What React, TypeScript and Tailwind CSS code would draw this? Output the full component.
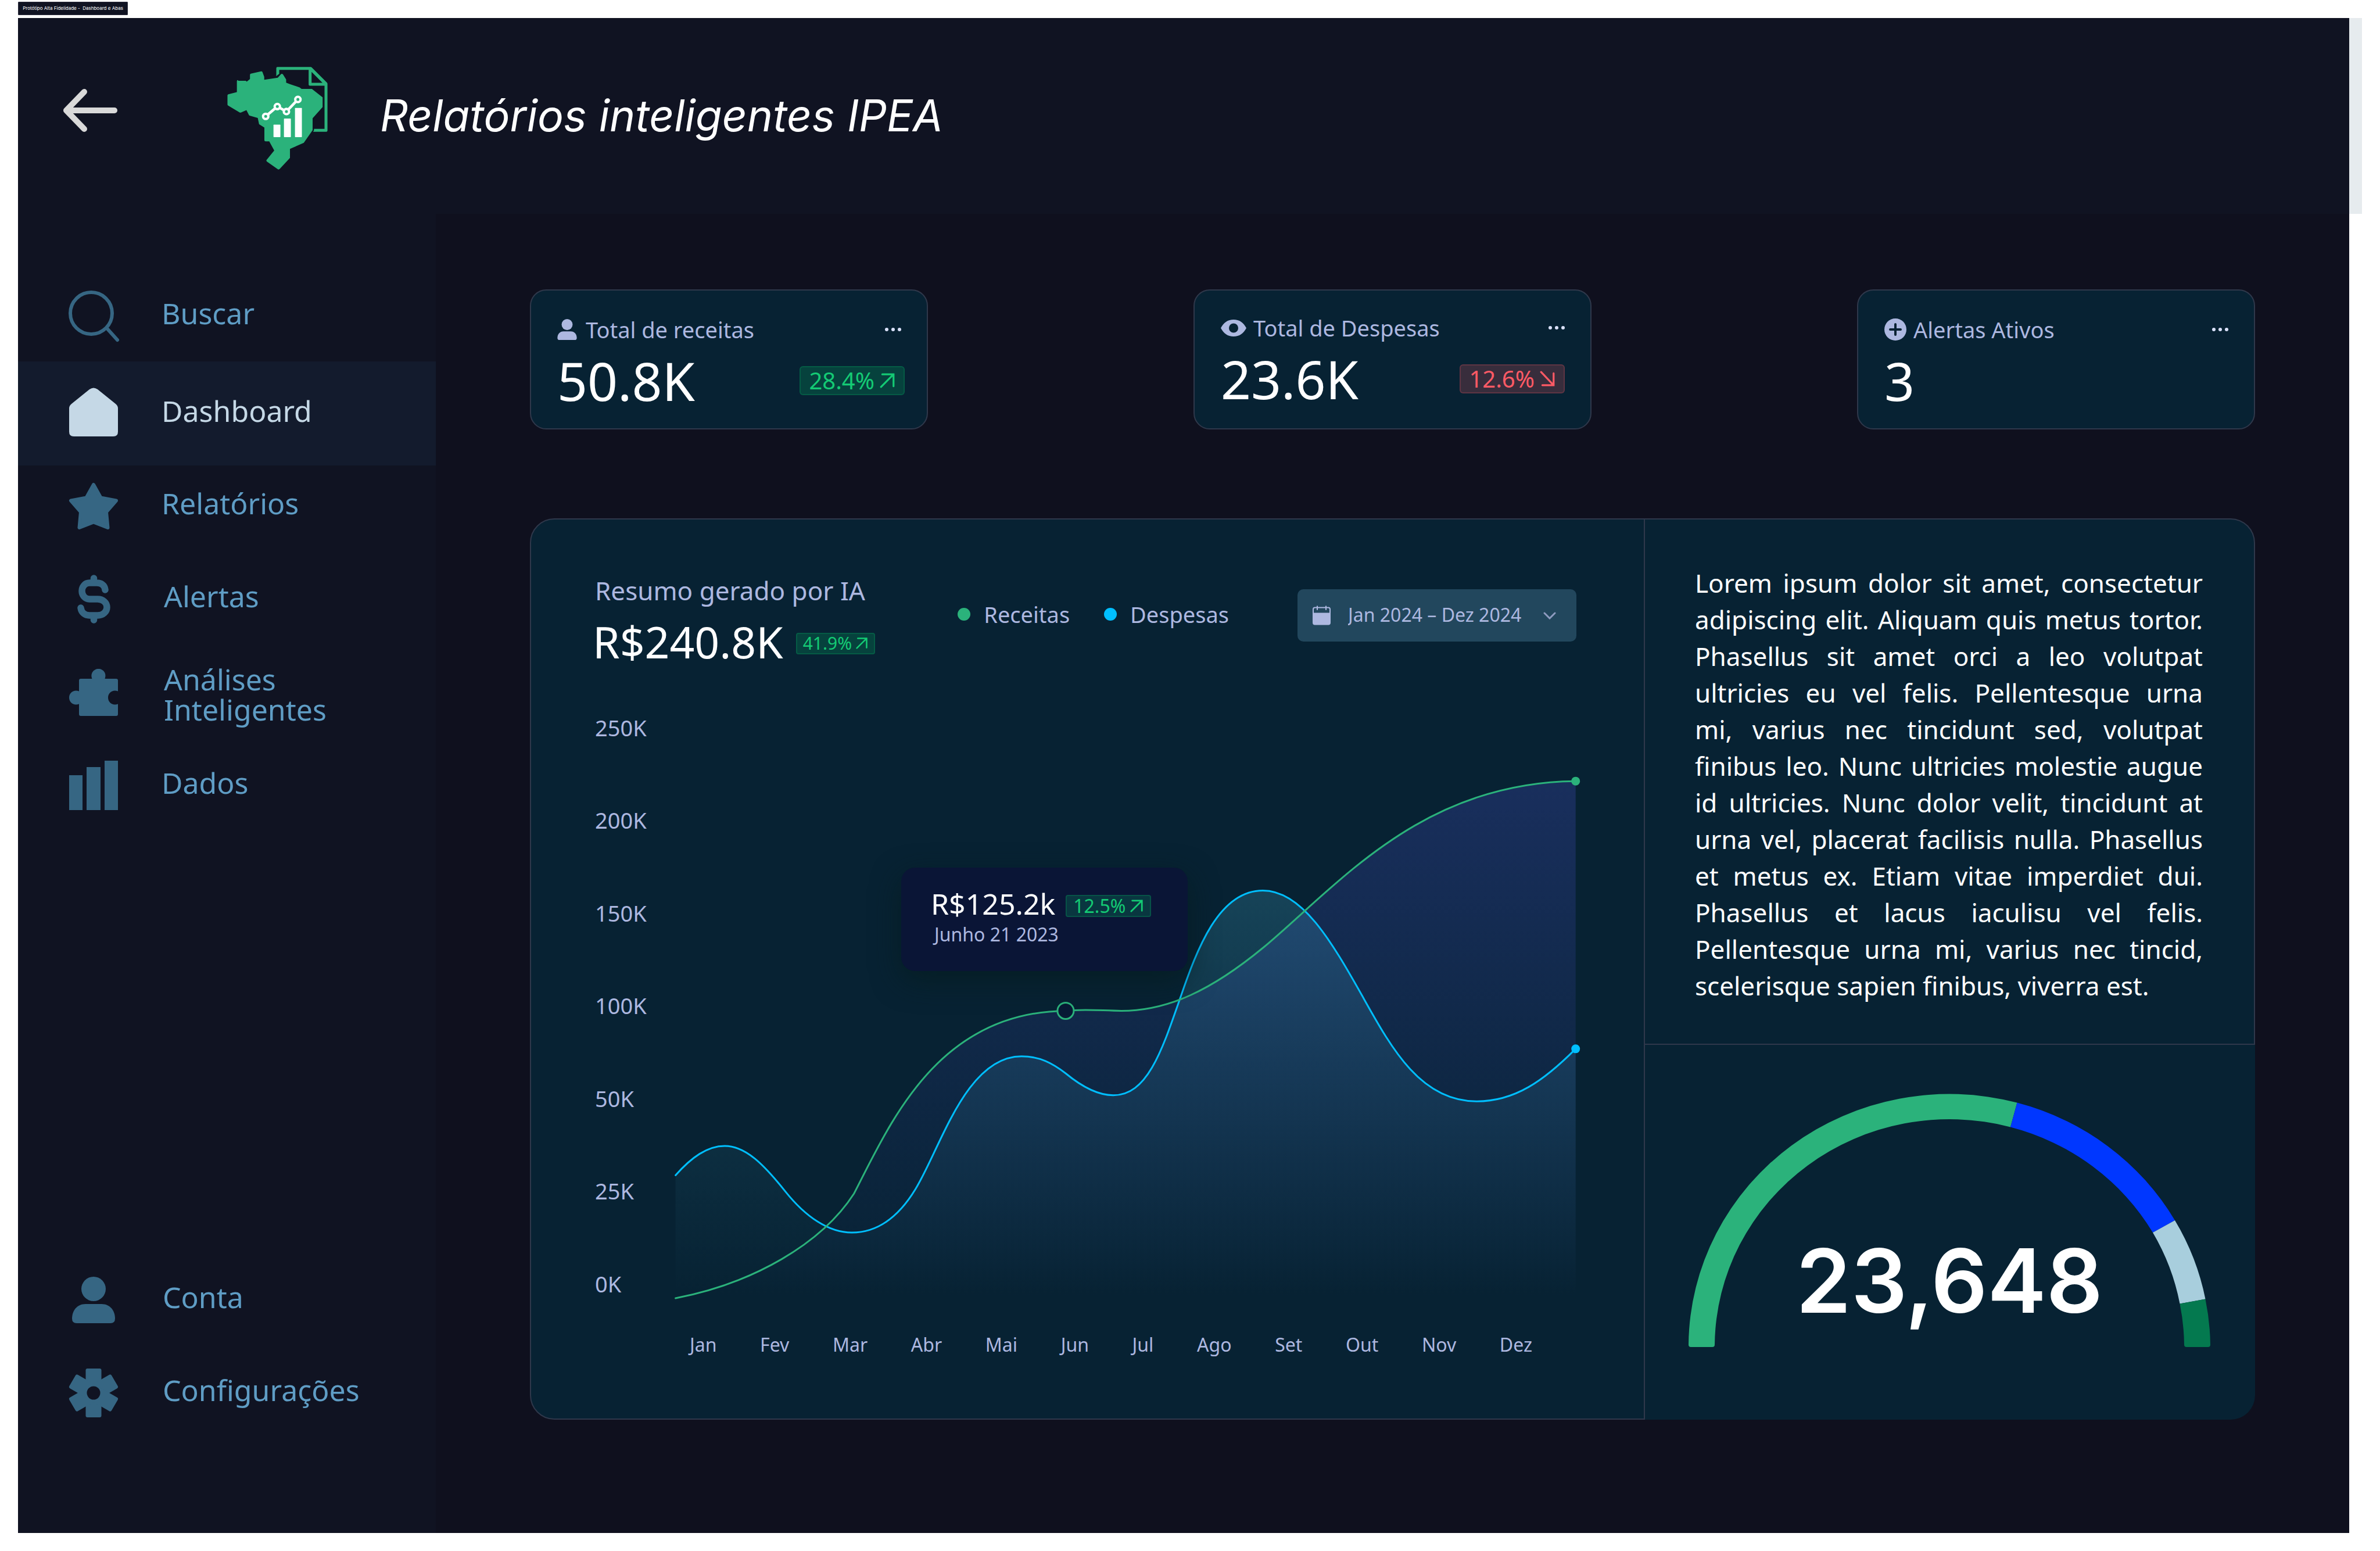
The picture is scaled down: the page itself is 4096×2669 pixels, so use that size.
import React from "react";

type IconProps = { className?: string };

/* ---------- Icons ---------- */

function ArrowLeftIcon({ className }: IconProps) {
  return (
    <svg viewBox="0 0 94 74" className={className} fill="none" stroke="currentColor" strokeWidth="10" strokeLinecap="round" strokeLinejoin="round" aria-hidden="true">
      <path d="M37 5 6 37l31 32" />
      <path d="M8 37h81" />
    </svg>
  );
}

function Logo({ className }: IconProps) {
  return (
    <svg viewBox="0 0 810 810" className={className} aria-hidden="true">
      <path
        fill="#2bb27b"
        d="M146 166h52l6 6 22-18v-28q0-6 6-8l70-16q6-1 9 5l12 32v20l92-14 18-20q8-12 18-2l21 34v22l28 11 64 21 13 10h70l73 58v66l-68 76v81l-60 86-94 41v61l-70 76q-7 6-14 1l-73-52q-6-5-2-11l52-64-34-62h-25q-8 0-8-8v-86l-36-23-9-42-55-16q-4-2-6-6l-16-32-36 16q-6 3-12-1l-76-45q-5-3-5-8v-61q0-6 6-8l58-15v-74q0-8 8-8z"
      />
      <path
        fill="#2bb27b"
        fillRule="evenodd"
        d="M405 135V80q0-8 8-8h226q4 0 7 3l103 103q4 4 4 9v318q0 8-8 8h-90q7-6 7-20h71V200H633q-8 0-8-8V92H425v28q-10 4-20 15zM645 106v74h74z"
      />
      <g fill="#fff">
        <rect x="386" y="464" width="47" height="85" rx="3" />
        <rect x="457" y="423" width="47" height="126" rx="3" />
        <rect x="532" y="351" width="47" height="198" rx="3" />
      </g>
      <path d="M333 408l79-67 62 34 78-82" fill="none" stroke="#fff" strokeWidth="18" />
      <g fill="#2bb27b" stroke="#fff" strokeWidth="16">
        <circle cx="333" cy="408" r="18" />
        <circle cx="412" cy="341" r="18" />
        <circle cx="474" cy="375" r="18" />
        <circle cx="552" cy="293" r="18" />
      </g>
    </svg>
  );
}

function NavSvg({ children }: { children: React.ReactNode }) {
  return (
    <svg viewBox="0 0 84 84" className="size-[84px] shrink-0 overflow-visible" fill="currentColor" aria-hidden="true">
      {children}
    </svg>
  );
}

const SearchIcon = () => (
  <NavSvg>
    <circle cx="38" cy="37" r="36" fill="none" stroke="currentColor" strokeWidth="6" />
    <path d="M65 63l18 20" stroke="currentColor" strokeWidth="6" strokeLinecap="round" />
  </NavSvg>
);

const HomeIcon = () => (
  <NavSvg>
    <path d="M35 3q7-5 14 0l31 25q4 3 4 8v40q0 8-8 8H8q-8 0-8-8V36q0-5 4-8z" />
  </NavSvg>
);

const StarIcon = () => (
  <NavSvg>
    <path d="M42 5l12.5 22.500 26.500 5L64 52l2.500 27L42 69.500 17.500 79 20 52 3 32.500l26.500-5z" stroke="currentColor" strokeWidth="6" strokeLinejoin="round" />
  </NavSvg>
);

const DollarIcon = () => (
  <NavSvg>
    <path
      d="M62 26c-1-9-8-12-14-12H35c-8 0-13 7-13 14s5 14 13 14h14c9 0 16 6 16 14s-7 14-16 14H35c-8 0-14-5-15-13M42.500 6v8M42.500 70v8"
      fill="none"
      stroke="currentColor"
      strokeWidth="11.500"
      strokeLinecap="round"
    />
  </NavSvg>
);

const PuzzleIcon = () => (
  <NavSvg>
    <path d="M17 22q0-3 3-3h19.500C36 10 42 2 50.500 2S65 10 61.500 19H81q3 0 3 3v18.500C75 37 67 43 67 51.500S75 66 84 62.500V80q0 3-3 3H20q-3 0-3-3V62.500C8 66 0 60 0 51.500S8 37 17 40.500z" />
  </NavSvg>
);

const BarsIcon = () => (
  <NavSvg>
    <rect x="0" y="25" width="23" height="60" />
    <rect x="30" y="11" width="24" height="74" />
    <rect x="61" y="0" width="23" height="85" />
  </NavSvg>
);

const personBody = "M28 49h28c14 0 23 11 23 25q0 8-8 8H13q-8 0-8-8c0-14 9-25 23-25z";

const PersonIcon = () => (
  <NavSvg>
    <circle cx="42" cy="23" r="21" />
    <path d={personBody} />
  </NavSvg>
);

const GearIcon = () => (
  <NavSvg>
    <rect x="28.500" y="0" width="27" height="84" rx="3" />
    <rect x="28.500" y="0" width="27" height="84" rx="3" transform="rotate(60 42 42)" />
    <rect x="28.500" y="0" width="27" height="84" rx="3" transform="rotate(120 42 42)" />
    <circle cx="42" cy="42" r="11.500" fill="#101322" />
  </NavSvg>
);

const SmallPersonIcon = () => (
  <svg viewBox="5 2 74 80" className="h-[36px] w-[34px]" fill="currentColor" aria-hidden="true">
    <circle cx="42" cy="23" r="21" />
    <path d={personBody} />
  </svg>
);

const EyeIcon = () => (
  <svg viewBox="0 0 44 29" className="h-[29px] w-[44px]" fill="currentColor" aria-hidden="true">
    <path fillRule="evenodd" d="M0 14.500C5 5 12 0 22 0s17 5 22 14.500C39 24 32 29 22 29S5 24 0 14.500zM22 6.500a8 8 0 100 16 8 8 0 000-16z" />
  </svg>
);

const PlusCircleIcon = () => (
  <svg viewBox="0 0 38 38" className="size-[38px]" aria-hidden="true">
    <circle cx="19" cy="19" r="19" fill="currentColor" />
    <path d="M19 10v18M10 19h18" stroke="#072233" strokeWidth="4" strokeLinecap="round" />
  </svg>
);

const CalendarIcon = ({ className }: IconProps) => (
  <svg viewBox="0 0 31 33" className={className} fill="currentColor" aria-hidden="true">
    <path fillRule="evenodd" d="M4 2h23q4 0 4 4v23q0 4-4 4H4q-4 0-4-4V6q0-4 4-4zM2 6v6h27V6q0-2-2-2h-3v3h-2V4H9v3H7V4H4Q2 4 2 6z" />
    <rect x="7" y="0" width="2" height="7" />
    <rect x="22" y="0" width="2" height="7" />
  </svg>
);

function TrendIcon({ down, className }: { down?: boolean; className?: string }) {
  return (
    <svg viewBox="0 0 26 26" className={className} fill="none" stroke="currentColor" strokeWidth="3" strokeLinecap="round" strokeLinejoin="miter" aria-hidden="true">
      {down ? <path d="M3 2l20 21M5 23h18V4" /> : <path d="M3 23L23 3M5 3h18v19" />}
    </svg>
  );
}

/* ---------- Sidebar ---------- */

type NavItemProps = { icon: React.ReactNode; label: string; row: string; text: string; active?: boolean };

function NavItem({ icon, label, row, text, active }: NavItemProps) {
  return (
    <li>
      <a
        href="#"
        aria-current={active ? "page" : undefined}
        className={`flex items-center gap-[75px] pl-[88px] ${row} ${active ? "bg-[#131b2d] text-[#c5d8e6]" : "text-[#366683]"}`}
      >
        {icon}
        <span className={`text-[50px] leading-[52px] ${text} ${active ? "" : "text-[#5f9dc5]"}`}>{label}</span>
      </a>
    </li>
  );
}

function Sidebar() {
  return (
    <aside className="flex w-[719px] shrink-0 flex-col justify-between bg-[#101322] pt-[97px] pb-[161px]">
      <nav aria-label="Principal">
        <ul>
          <NavItem icon={<SearchIcon />} label="Buscar" row="h-[157px]" text="pb-[10px]" />
          <NavItem icon={<HomeIcon />} label="Dashboard" row="h-[179px] pb-[5px]" text="pb-[4px]" active />
          <NavItem icon={<StarIcon />} label="Relatórios" row="h-[150px] pb-[10px]" text="pb-[10px]" />
          <NavItem icon={<DollarIcon />} label="Alertas" row="h-[160px]" text="pb-[10px] pl-[4px]" />
          <NavItem icon={<PuzzleIcon />} label="Análises Inteligentes" row="h-[160px]" text="w-[300px] pt-[8px] pl-[4px]" />
          <NavItem icon={<BarsIcon />} label="Dados" row="h-[160px]" text="pb-[8px]" />
        </ul>
      </nav>
      <nav aria-label="Usuário">
        <ul>
          <NavItem icon={<PersonIcon />} label="Conta" row="h-[160px]" text="pb-[10px] pl-[2px]" />
          <NavItem icon={<GearIcon />} label="Configurações" row="h-[160px]" text="pb-[10px] pl-[2px]" />
        </ul>
      </nav>
    </aside>
  );
}

/* ---------- Summary cards ---------- */

const badgeSizes = {
  sm: { box: "h-[37px] gap-[6px] rounded-[4px] px-[10px] text-[30px]", icon: "size-[22px]" },
  md: { box: "h-[38px] gap-[7px] rounded-[4px] px-[11px] text-[32px]", icon: "size-[24px]" },
  lg: { box: "h-[50px] gap-[8px] rounded-[6px] px-[14px] text-[40px]", icon: "size-[28px]" },
};

function Badge({ value, down, size = "lg" }: { value: string; down?: boolean; size?: keyof typeof badgeSizes }) {
  const tone = down
    ? "border-[#ff5a65]/20 bg-[#ff5a65]/20 text-[#ff5a65]"
    : "border-[#05c168]/20 bg-[#05c168]/20 text-[#14ca74]";
  return (
    <span className={`flex items-center border-2 leading-none ${tone} ${badgeSizes[size].box}`}>
      {value}
      <TrendIcon down={down} className={badgeSizes[size].icon} />
    </span>
  );
}

type CardProps = { icon: React.ReactNode; title: string; value: string; badge?: React.ReactNode; gap: string; pad: string };

function StatCard({ icon, title, value, badge, gap, pad }: CardProps) {
  return (
    <article className={`h-[241px] w-[685px] rounded-[28px] border-2 border-[#2f384b] bg-[#072233] pr-[38px] pl-[45px] ${pad}`}>
      <div className="flex h-[48px] items-center">
        <h2 className={`flex items-center text-[38px] leading-[48px] text-[#adb8e0] ${gap}`}>
          {icon}
          {title}
        </h2>
        <button type="button" aria-label="Mais opções" className="mr-[6px] ml-auto flex gap-[5px]">
          <i className="size-[6px] rounded-full bg-[#d9e1fa]" />
          <i className="size-[6px] rounded-full bg-[#d9e1fa]" />
          <i className="size-[6px] rounded-full bg-[#d9e1fa]" />
        </button>
      </div>
      <div className="flex h-[128px] items-center justify-between">
        <p className="text-[91px] leading-none text-white">{value}</p>
        {badge}
      </div>
    </article>
  );
}

/* ---------- Chart ---------- */

type Point = [number, number];
type Curve = { start: Point; segments: [Point, Point, Point][] };

const revenue: Curve = {
  start: [213, 1249],
  segments: [
    [[320, 1215], [415, 1125], [460, 1010]],
    [[510, 850], [575, 595], [753, 592]],
    [[780, 587], [805, 592], [830, 592]],
    [[895, 592], [955, 545], [1027, 447]],
    [[1130, 305], [1245, 70], [1459, 67]],
  ],
};

const expenses: Curve = {
  start: [213, 968],
  segments: [
    [[235, 927], [257, 901], [281, 901]],
    [[310, 901], [335, 943], [365, 1005]],
    [[393, 1063], [425, 1099], [457, 1099]],
    [[490, 1099], [520, 1068], [545, 1000]],
    [[580, 905], [615, 696], [692, 696]],
    [[717, 696], [735, 712], [753, 735]],
    [[775, 765], [797, 785], [819, 785]],
    [[865, 785], [885, 690], [911, 566]],
    [[935, 450], [965, 317], [1026, 317]],
    [[1080, 317], [1120, 430], [1165, 562]],
    [[1205, 680], [1245, 799], [1322, 799]],
    [[1375, 799], [1415, 752], [1459, 679]],
  ],
};

const sx = (x: number) => Math.round((x * 1.2424 - 264) * 10) / 10;
const sy = (y: number) => Math.round((y * 0.7523 + 67.7) * 10) / 10;
const pt = ([x, y]: Point) => `${sx(x)} ${sy(y)}`;
const linePath = (c: Curve) => `M${pt(c.start)}` + c.segments.map((s) => `C${s.map(pt).join(" ")}`).join("");
const areaPath = (c: Curve) => `${linePath(c)}V1008H${sx(213)}Z`;

function Chart() {
  return (
    <svg viewBox="0 0 1550 1008" className="block h-auto w-full overflow-visible" role="img" aria-label="Receitas e despesas por mês">
      <defs>
        <linearGradient id="revenue-fill" gradientUnits="userSpaceOnUse" x1="0" y1="118" x2="0" y2="1008">
          <stop offset="0" stopColor="#3643a1" stopOpacity="0.38" />
          <stop offset="1" stopColor="#3643a1" stopOpacity="0" />
        </linearGradient>
        <linearGradient id="expenses-fill" gradientUnits="userSpaceOnUse" x1="0" y1="306" x2="0" y2="1000">
          <stop offset="0" stopColor="#52c7ec" stopOpacity="0.2" />
          <stop offset="1" stopColor="#52c7ec" stopOpacity="0" />
        </linearGradient>
      </defs>
      <path d={areaPath(revenue)} fill="url(#revenue-fill)" />
      <path d={areaPath(expenses)} fill="url(#expenses-fill)" />
      <path d={linePath(expenses)} fill="none" stroke="#00bfff" strokeWidth="3" strokeLinecap="round" />
      <path d={linePath(revenue)} fill="none" stroke="#2bb27b" strokeWidth="3" strokeLinecap="round" />
      <circle cx={sx(753)} cy={sy(592)} r="14" fill="#081a35" stroke="#2bb27b" strokeWidth="3" />
      <circle cx={sx(1459)} cy={sy(67)} r="7.500" fill="#2bb27b" />
      <circle cx={sx(1459)} cy={sy(679)} r="7.500" fill="#00bfff" />
    </svg>
  );
}

const levels = ["250K", "200K", "150K", "100K", "50K", "25K", "0K"];
const months = ["Jan", "Fev", "Mar", "Abr", "Mai", "Jun", "Jul", "Ago", "Set", "Out", "Nov", "Dez"];

function Legend({ color, label }: { color: string; label: string }) {
  return (
    <li className="flex items-center gap-[23px]">
      <i className={`size-[22px] rounded-full ${color}`} />
      {label}
    </li>
  );
}

function ChartSection() {
  return (
    <section className="min-w-0 flex-1 rounded-l-[42px] border-2 border-[#2f384b] bg-[#072233] pt-[90px] pr-[116px] pl-[110px] text-[#adb8e0]">
      <div className="flex items-start">
        <div>
          <h2 className="text-[44px] leading-[64px]">Resumo gerado por IA</h2>
          <div className="flex h-[108px] items-center gap-[22px]">
            <p className="-ml-[4px] pt-[4px] text-[75px] leading-none text-white">R$240.8K</p>
            <div className="pt-[10px]">
              <Badge value="41.9%" size="sm" />
            </div>
          </div>
        </div>
        <div className="mt-[30px] ml-auto flex h-[90px] items-center gap-[118px]">
          <ul className="flex gap-[59px] pb-[4px] text-[38px] leading-[52px]">
            <Legend color="bg-[#2bb27b]" label="Receitas" />
            <Legend color="bg-[#00bfff]" label="Despesas" />
          </ul>
          <div className="relative">
            <select
              aria-label="Período"
              className="h-[90px] w-[480px] appearance-none rounded-[10px] bg-[#22475d] pr-[60px] pb-[3px] pl-[87px] text-[32px] text-[#adb8e0]"
            >
              <option>Jan 2024 – Dez 2024</option>
            </select>
            <CalendarIcon className="pointer-events-none absolute top-[28px] left-[26px] h-[34px] w-[31px]" />
            <svg viewBox="0 0 22 13" className="pointer-events-none absolute top-[39px] right-[35px] h-[13px] w-[22px]" fill="none" stroke="#8f9cc0" strokeWidth="3" strokeLinecap="round" aria-hidden="true">
              <path d="M2 2l9 9 9-9" />
            </svg>
          </div>
        </div>
      </div>

      <div className="mt-[70px] flex">
        <ul className="flex w-[138px] shrink-0 flex-col justify-between text-[38px] leading-[52px]">
          {levels.map((l) => (
            <li key={l}>{l}</li>
          ))}
        </ul>
        <div className="relative min-w-0 flex-1">
          <Chart />
          <div role="tooltip" className="absolute top-[267px] left-[389px] w-[493px] rounded-[24px] bg-[#0a1536] pt-[30px] pb-[42px] pl-[51px] shadow-[0_16px_50px_rgba(5,28,30,0.7)]">
            <div className="flex h-[64px] items-center gap-[18px]">
              <span className="text-[50px] leading-none text-white">R$125.2k</span>
              <div className="pt-[8px]">
                <Badge value="12.5%" size="md" />
              </div>
            </div>
            <p className="pl-[6px] text-[32px] leading-[42px]">Junho 21 2023</p>
          </div>
        </div>
      </div>

      <ul className="mt-[57px] flex justify-between pr-[76px] pl-[163px] text-[32px] leading-[44px]">
        {months.map((m) => (
          <li key={m}>{m}</li>
        ))}
      </ul>
    </section>
  );
}

/* ---------- Gauge ---------- */

function Gauge() {
  return (
    <svg viewBox="0 0 898 436" className="block h-auto w-full" role="img" aria-label="Distribuição do total">
      <path fill="#2bb27b" d="M4 436Q0 436 0 432A449 435 0 0 1 565.500 15.500L554 57.500A404 392 0 0 0 45 432Q45 436 41 436Z" />
      <path fill="#0037ff" d="M565.500 15.500A449 435 0 0 1 837 218L799 239A404 392 0 0 0 554 57.500Z" />
      <path fill="#a8cedd" d="M837 218A449 435 0 0 1 889.500 353.500L845.500 361.500A404 392 0 0 0 799 239Z" />
      <path fill="#04794f" d="M889.500 353.500A449 435 0 0 1 898 432Q898 436 894 436H857Q853 436 853 432A404 392 0 0 0 845.500 361.500Z" />
    </svg>
  );
}

/* ---------- Page ---------- */

const summary =
  "Lorem ipsum dolor sit amet, consectetur adipiscing elit. Aliquam quis metus tortor. Phasellus sit amet orci a leo volutpat ultricies eu vel felis. " +
  "Pellentesque urna mi,\u00a0varius nec tincidunt sed, volutpat finibus leo. Nunc ultricies molestie augue id ultricies. Nunc dolor velit, tincidunt at urna vel, " +
  "placerat facilisis nulla. Phasellus et metus ex. Etiam vitae imperdiet dui. Phasellus et lacus iaculisu vel felis. Pellentesque urna mi, varius nec tincid, " +
  "scelerisque sapien finibus, viverra est.";

export default function App() {
  return (
    <div className="flex min-h-screen flex-col bg-white px-[31px] pb-[31px] font-['Noto_Sans',sans-serif]">
      <div className="flex h-[31px] items-start pt-[3px]">
        <p className="flex h-[23px] w-[189px] items-center justify-center rounded-[1px] border border-[#2b2c3c] bg-[#101322] pb-[2px] font-['Inter',sans-serif] text-[8px] leading-none whitespace-pre text-white">
          Protótipo Alta Fidelidade -  Dashboard e Abas
        </p>
      </div>

      <div className="flex">
        <header className="flex h-[337px] min-w-0 flex-1 items-center bg-[#101322] pl-[77px]">
          <button type="button" aria-label="Voltar" className="mb-[20px] text-[#d9d9d9]">
            <ArrowLeftIcon className="h-[74px] w-[94px]" />
          </button>
          <Logo className="ml-[171px] size-[205px]" />
          <h1 className="ml-[76px] pb-[3px] font-['Inter',sans-serif] text-[75px] leading-none text-white italic">Relatórios inteligentes IPEA</h1>
        </header>
        <div className="w-[22px] bg-[#e6ebee]" />
      </div>

      <div className="mr-[22px] flex flex-1">
        <Sidebar />
        <main className="flex min-w-0 flex-1 flex-col bg-[#0f101e] px-[162px] pt-[130px] pb-[195px]">
          <div className="flex justify-between">
            <StatCard icon={<SmallPersonIcon />} title="Total de receitas" value="50.8K" badge={<Badge value="28.4%" />} gap="gap-[15px]" pad="pt-[43px]" />
            <StatCard
              icon={<EyeIcon />}
              title="Total de Despesas"
              value="23.6K"
              badge={
                <div className="pr-[6px]">
                  <Badge value="12.6%" down />
                </div>
              }
              gap="gap-[12px]"
              pad="pt-[40px]"
            />
            <StatCard icon={<PlusCircleIcon />} title="Alertas Ativos" value="3" gap="gap-[12px]" pad="pt-[43px]" />
          </div>

          <div className="mt-[153px] flex flex-1">
            <ChartSection />
            <div className="flex w-[1050px] shrink-0 flex-col">
              <section className="rounded-tr-[42px] border-y-2 border-r-2 border-[#2f384b] bg-[#072233] pt-[78px] pr-[88px] pb-[68px] pl-[86px]">
                <p className="text-justify text-[44px] leading-[63px] text-white">{summary}</p>
              </section>
              <section className="flex-1 rounded-br-[42px] bg-[#072233] pt-[84px] pr-[77px] pl-[75px]">
                <div className="relative">
                  <Gauge />
                  <p className="absolute inset-x-0 bottom-[38px] text-center font-['Inter',sans-serif] text-[152px] leading-none font-semibold text-white">23,648</p>
                </div>
              </section>
            </div>
          </div>
        </main>
      </div>
    </div>
  );
}
